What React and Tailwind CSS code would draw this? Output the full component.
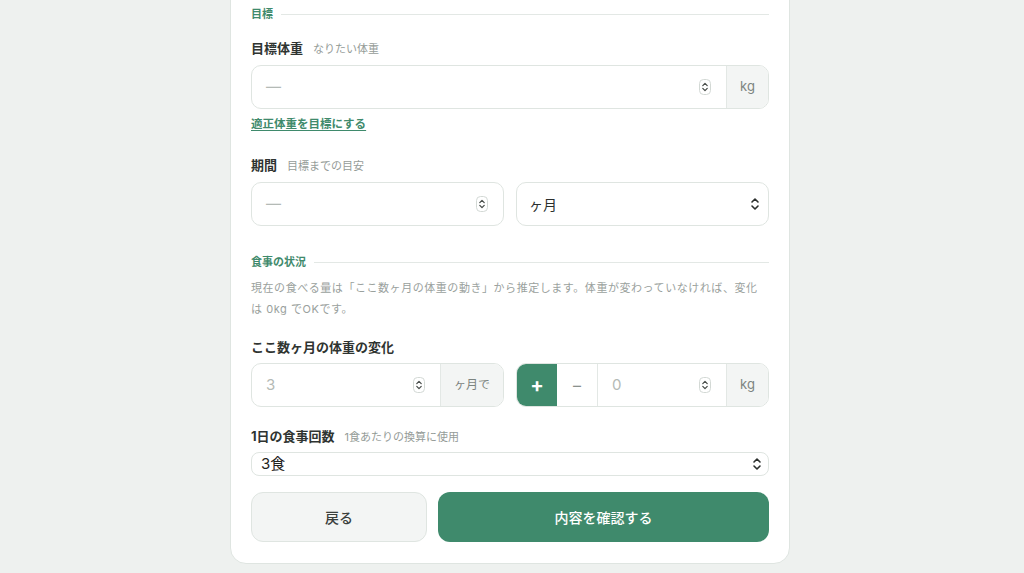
import React from 'react';

// 数値入力の上下ボタン
function Spinner() {
  return (
    <svg width="12" height="16" viewBox="0 0 12 16" className="shrink-0">
      <rect x="0.5" y="0.5" width="11" height="15" rx="4" fill="#fff" stroke="#d3d9d5" />
      <path d="M3.8 6.6 L6 4.4 L8.2 6.6" fill="none" stroke="#4a4f4c" strokeWidth="1.3" strokeLinecap="round" strokeLinejoin="round" />
      <path d="M3.8 9.4 L6 11.6 L8.2 9.4" fill="none" stroke="#4a4f4c" strokeWidth="1.3" strokeLinecap="round" strokeLinejoin="round" />
    </svg>
  );
}

// セレクトの矢印
function SelectArrows() {
  return (
    <svg width="10" height="14" viewBox="0 0 10 14" className="shrink-0">
      <path d="M2 5 L5 2 L8 5" fill="none" stroke="#2b2f2d" strokeWidth="1.6" strokeLinecap="round" strokeLinejoin="round" />
      <path d="M2 9 L5 12 L8 9" fill="none" stroke="#2b2f2d" strokeWidth="1.6" strokeLinecap="round" strokeLinejoin="round" />
    </svg>
  );
}

function SectionTitle({ children }) {
  return (
    <div className="flex items-center gap-2 h-4">
      <span className="text-[11px] font-bold text-[#3f8a6c] leading-4">{children}</span>
      <div className="flex-1 h-px bg-[#e3e8e5]" />
    </div>
  );
}

function Label({ title, note }) {
  return (
    <div className="flex items-baseline gap-[10px] h-5">
      <span className="text-[13px] font-bold text-[#2f3431] leading-5">{title}</span>
      {note && <span className="text-[11px] text-[#959c98] leading-5">{note}</span>}
    </div>
  );
}

function NumberField({ value, muted = true, className = '' }) {
  return (
    <div className={`flex items-center h-full pl-[14px] pr-[15px] ${className}`}>
      <span className={`flex-1 text-[15px] ${muted ? 'text-[#b4bab6]' : 'text-[#2b2f2d]'}`}>{value}</span>
      <Spinner />
    </div>
  );
}

function Addon({ children, className = '' }) {
  return (
    <div className={`flex items-center justify-center h-full bg-[#f3f5f4] border-l border-[#e3e8e5] text-[#7c8480] ${className}`}>
      {children}
    </div>
  );
}

export default function App() {
  return (
    <div
      className="min-h-screen bg-[#eef1ef] flex justify-center"
      style={{ fontFamily: 'Inter, "Noto Sans CJK JP", sans-serif' }}
    >
      <div className="w-[560px] -mt-5 mb-[10px] mr-1 self-start bg-white border border-[#dfe5e1] rounded-2xl px-5 pt-[25px] pb-[21px]">
        {/* 目標 */}
        <SectionTitle>目標</SectionTitle>

        <div className="mt-4">
          <Label title="目標体重" note="なりたい体重" />
          <div className="mt-[7px] flex h-[44px] border border-[#dfe5e1] rounded-[10px] overflow-hidden">
            <NumberField value="—" className="flex-1" />
            <Addon className="w-[42px] text-[13px]">kg</Addon>
          </div>
          <a href="#" className="mt-[6px] inline-block text-[11.5px] leading-[18px] font-bold text-[#3f8a6c] underline underline-offset-2">
            適正体重を目標にする
          </a>
        </div>

        <div className="mt-[21px]">
          <Label title="期間" note="目標までの目安" />
          <div className="mt-[7px] grid grid-cols-2 gap-3">
            <div className="h-[44px] border border-[#dfe5e1] rounded-[10px]">
              <NumberField value="—" />
            </div>
            <div className="h-[44px] border border-[#dfe5e1] rounded-[10px] flex items-center pl-3 pr-[8px]">
              <span className="flex-1 text-[14px] text-[#2b2f2d]">ヶ月</span>
              <SelectArrows />
            </div>
          </div>
        </div>

        {/* 食事の状況 */}
        <div className="mt-[28px]">
          <SectionTitle>食事の状況</SectionTitle>
        </div>
        <p className="mt-2 text-[11px] leading-[21px] tracking-[0.05em] text-[#9aa19d]">
          現在の食べる量は「ここ数ヶ月の体重の動き」から推定します。体重が変わっていなければ、変化は 0kg でOKです。
        </p>

        <div className="mt-[17px]">
          <Label title="ここ数ヶ月の体重の変化" />
          <div className="mt-[6px] grid grid-cols-2 gap-3">
            <div className="flex h-[44px] border border-[#dfe5e1] rounded-[10px] overflow-hidden">
              <NumberField value="3" className="flex-1" />
              <Addon className="w-[63px] text-[12px]">ヶ月で</Addon>
            </div>
            <div className="flex h-[44px] border border-[#dfe5e1] rounded-[10px] overflow-hidden">
              <button className="w-[40px] h-full bg-[#3f8a6c] text-white text-[20px] font-bold flex items-center justify-center">+</button>
              <button className="w-[41px] h-full bg-white border-r border-[#e3e8e5] text-[#8a918d] text-[16px] flex items-center justify-center">–</button>
              <NumberField value="0" className="flex-1" />
              <Addon className="w-[42px] text-[13px]">kg</Addon>
            </div>
          </div>
        </div>

        <div className="mt-[19px]">
          <Label title="1日の食事回数" note="1食あたりの換算に使用" />
          <div className="mt-[6px] h-[24px] border border-[#dfe5e1] rounded-[8px] flex items-center pl-[9px] pr-[6px]">
            <span className="flex-1 text-[15px] text-[#1f2321]">3食</span>
            <SelectArrows />
          </div>
        </div>

        {/* 操作ボタン */}
        <div className="mt-4 flex gap-[11px]">
          <button className="w-[176px] h-[50px] rounded-xl bg-[#f3f5f4] border border-[#dfe5e1] text-[14px] font-medium text-[#3a3f3c]">
            戻る
          </button>
          <button className="flex-1 h-[50px] rounded-xl bg-[#3f8a6c] text-[14px] font-medium text-white">
            内容を確認する
          </button>
        </div>
      </div>
    </div>
  );
}
